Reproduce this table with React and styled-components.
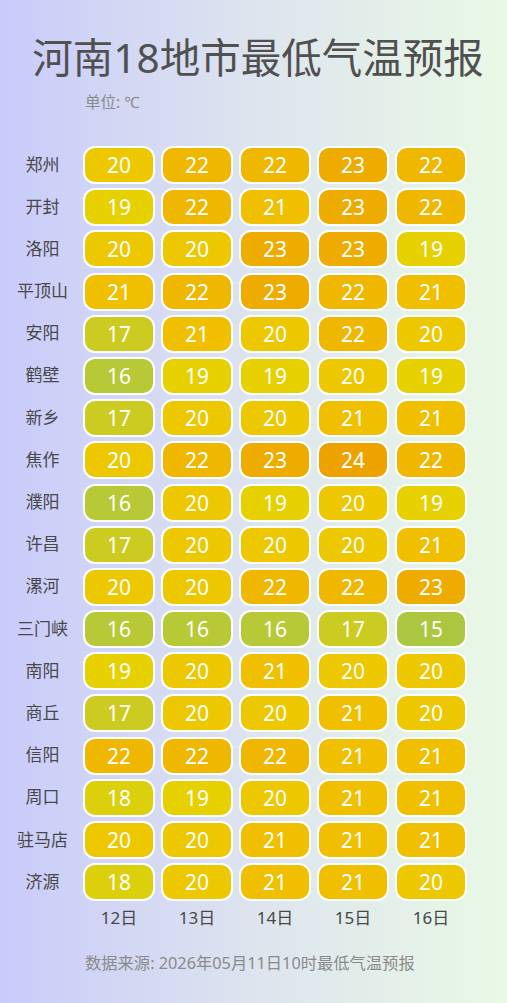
import { Fragment } from "react"
import styled, { createGlobalStyle } from "styled-components"

const GlobalStyle = createGlobalStyle`
    html, body {
        margin: 0;
        padding: 0;
        height: 100%;
    }
    body {
        background: linear-gradient(to right, #c9cbfa 0%, #dde4ee 50%, #e9f9e5 100%);
        font-family: "Noto Sans", "Noto Sans CJK SC", sans-serif;
    }
`

const Page = styled.div`
    width: 507px;
    height: 1003px;
    box-sizing: border-box;
    padding-top: 32px;
`
const Title = styled.h1`
    margin: 0 0 0 9px;
    height: 52px;
    line-height: 52px;
    text-align: center;
    font-size: 40.5px;
    font-weight: 400;
    color: #505050;
`
const Unit = styled.div`
    margin-top: 7px;
    padding-left: 85px;
    height: 22px;
    line-height: 22px;
    font-size: 15.5px;
    color: #8a8a8a;
`
const Grid = styled.div`
    margin-top: 33px;
    display: grid;
    grid-template-columns: 77px repeat(5, 72px);
    grid-auto-rows: 38px;
    column-gap: 6px;
    row-gap: 4.2px;
`
const City = styled.div`
    padding-left: 8px;
    display: flex;
    align-items: center;
    justify-content: center;
    font-size: 17px;
    color: #484848;
    padding-bottom: 4px;
`
const Cell = styled.div`
    box-sizing: border-box;
    border: 2px solid #ffffff;
    border-radius: 12px;
    background: ${({ $bg }) => $bg};
    color: #ffffff;
    font-size: 21px;
    display: flex;
    align-items: center;
    justify-content: center;
`
const DayRow = styled.div`
    margin-top: 5px;
    display: grid;
    grid-template-columns: 77px repeat(5, 72px);
    column-gap: 6px;
`
const Day = styled.div`
    text-align: center;
    font-size: 17px;
    line-height: 24px;
    color: #484848;
`
const Source = styled.div`
    margin-top: 22px;
    padding-left: 85px;
    font-size: 16.3px;
    line-height: 22px;
    color: #8a8a8a;
`

const colors = {
    15: "#abc73f",
    16: "#b7c937",
    17: "#cbcb22",
    18: "#dccf0c",
    19: "#e6d000",
    20: "#edc800",
    21: "#efbf00",
    22: "#efb700",
    23: "#eeab00",
    24: "#eea200",
}

const data = [
    ["郑州", 20, 22, 22, 23, 22],
    ["开封", 19, 22, 21, 23, 22],
    ["洛阳", 20, 20, 23, 23, 19],
    ["平顶山", 21, 22, 23, 22, 21],
    ["安阳", 17, 21, 20, 22, 20],
    ["鹤壁", 16, 19, 19, 20, 19],
    ["新乡", 17, 20, 20, 21, 21],
    ["焦作", 20, 22, 23, 24, 22],
    ["濮阳", 16, 20, 19, 20, 19],
    ["许昌", 17, 20, 20, 20, 21],
    ["漯河", 20, 20, 22, 22, 23],
    ["三门峡", 16, 16, 16, 17, 15],
    ["南阳", 19, 20, 21, 20, 20],
    ["商丘", 17, 20, 20, 21, 20],
    ["信阳", 22, 22, 22, 21, 21],
    ["周口", 18, 19, 20, 21, 21],
    ["驻马店", 20, 20, 21, 21, 21],
    ["济源", 18, 20, 21, 21, 20],
]

const days = ["12日", "13日", "14日", "15日", "16日"]

const App = () => {
    return (
        <>
            <GlobalStyle />
            <Page>
                <Title>河南18地市最低气温预报</Title>
                <Unit>单位: ℃</Unit>
                <Grid>
                    {data.map(([city, ...temps]) => (
                        <Fragment key={city}>
                            <City>{city}</City>
                            {temps.map((t, i) => (
                                <Cell key={i} $bg={colors[t]}>{t}</Cell>
                            ))}
                        </Fragment>
                    ))}
                </Grid>
                <DayRow>
                    <div />
                    {days.map(d => <Day key={d}>{d}</Day>)}
                </DayRow>
                <Source>数据来源: 2026年05月11日10时最低气温预报</Source>
            </Page>
        </>
    )
}

export default App
